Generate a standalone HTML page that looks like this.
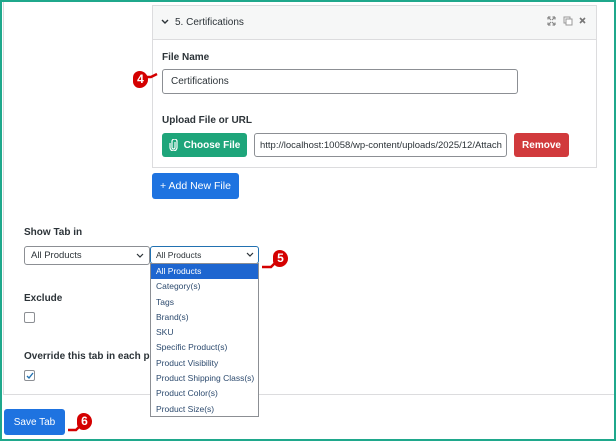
<!DOCTYPE html>
<html><head><meta charset="utf-8"><style>
*{box-sizing:border-box;margin:0;padding:0}
body{width:616px;height:441px;overflow:hidden;background:#fff;font-family:"Liberation Sans",sans-serif;color:#1d2327;position:relative}
.a{position:absolute}
.frame{left:0;top:0;width:616px;height:441px;border:2px solid #1fa88c}
.lbl{font-size:10px;font-weight:bold;color:#2c3338}
.inp{border:1px solid #8c8f94;border-radius:3px;background:#fff;font-size:10px;color:#2c3338;padding-left:8px;display:flex;align-items:center}
.btn{border-radius:3px;color:#fff;font-size:10px;font-weight:bold;display:flex;align-items:center;justify-content:center}
.li{font-size:8.5px;color:#2c4a6e;height:15.3px;line-height:15.3px;padding-left:5px}
.badge{color:#fff;font-weight:bold;font-size:12px;background:#d40000;border-radius:7px 9px 9px 7px;width:15px;height:17px;text-align:center;line-height:17px}
.cb{width:11px;height:11px;border:1px solid #8c8f94;border-radius:2px;background:#fff}
</style></head><body>
<div class="a frame"></div>
<div class="a" style="left:3px;top:2px;width:1px;height:393px;background:#dcdcde"></div>
<div class="a" style="left:3px;top:394px;width:611px;height:1px;background:#dcdcde"></div>

<div class="a" style="left:152px;top:5px;width:445px;height:163px;border:1px solid #dcdcde;background:#fff"></div>
<div class="a" style="left:153px;top:6px;width:443px;height:34px;background:#f6f7f7;border-bottom:1px solid #dcdcde"></div>
<svg class="a" style="left:161px;top:19px" width="8" height="6" viewBox="0 0 8 6"><path d="M1 1l3 3 3-3" stroke="#2c3338" stroke-width="1.4" fill="none"/></svg>
<div class="a" style="left:175px;top:17px;font-size:10px;color:#2c3338">5. Certifications</div>
<svg class="a" style="left:547px;top:16px" width="42" height="10" viewBox="0 0 42 10"><path d="M1 1l3 3M1 1h2.5M1 1v2.5M8 1L5 4M8 1H5.5M8 1v2.5M1 9l3-3M1 9h2.5M1 9V6.5M8 9L5 6M8 9H5.5M8 9V6.5" stroke="#888" stroke-width="1.2" fill="none"/><rect x="17" y="1" width="6" height="6" fill="none" stroke="#999"/><rect x="19" y="3" width="6" height="6" fill="#fff" stroke="#999"/><path d="M33 2l5 5M38 2l-5 5" stroke="#777" stroke-width="1.6"/></svg>

<div class="a lbl" style="left:162px;top:52px">File Name</div>
<div class="a inp" style="left:162px;top:69px;width:356px;height:25px">Certifications</div>
<div class="a lbl" style="left:162px;top:115px">Upload File or URL</div>
<div class="a btn" style="left:162px;top:133px;width:85px;height:24px;background:#1ea57a"><svg width="9" height="12" viewBox="0 0 9 12" style="margin-right:6px"><path d="M6 3v5.5a1.5 1.5 0 0 1-3 0V2.5a2.5 2.5 0 0 1 5 0V8.5a3.5 3.5 0 0 1-7 0V4" stroke="#fff" stroke-width="1.2" fill="none"/></svg>Choose File</div>
<div class="a inp" style="left:254px;top:133px;width:253px;height:24px;white-space:nowrap;overflow:hidden;font-size:9.5px;padding-left:5px">http://localhost:10058/wp-content/uploads/2025/12/Attach</div>
<div class="a btn" style="left:514px;top:133px;width:55px;height:24px;background:#d13a3c">Remove</div>
<div class="a btn" style="left:152px;top:173px;width:87px;height:26px;background:#1e73e0;font-weight:normal;font-size:10.5px">+ Add New File</div>

<div class="a badge" style="left:133px;top:71px">4</div>
<svg class="a" style="left:145px;top:72px" width="14" height="10"><path d="M0 5h6l6-3" stroke="#d40000" stroke-width="2.5" fill="none"/></svg>

<div class="a lbl" style="left:24px;top:227px">Show Tab in</div>
<div class="a inp" style="left:24px;top:246px;width:126px;height:19px;font-size:9.5px;padding-left:6px">All Products</div>
<svg class="a" style="left:136px;top:253px" width="8" height="6"><path d="M1 1l3 3 3-3" stroke="#2c3338" stroke-width="1.2" fill="none"/></svg>
<div class="a inp" style="left:150px;top:246px;width:109px;height:18px;border-color:#2271b1;font-size:8.5px;padding-left:5px">All Products</div>
<svg class="a" style="left:246px;top:252px" width="8" height="6"><path d="M1 1l3 3 3-3" stroke="#2c3338" stroke-width="1.2" fill="none"/></svg>
<div class="a" style="left:150px;top:263px;width:109px;height:154px;border:1px solid #8c8f94;background:#fff">
<div class="li" style="background:#1e66d0;color:#fff">All Products</div>
<div class="li">Category(s)</div><div class="li">Tags</div><div class="li">Brand(s)</div><div class="li">SKU</div>
<div class="li">Specific Product(s)</div><div class="li">Product Visibility</div><div class="li">Product Shipping Class(s)</div>
<div class="li">Product Color(s)</div><div class="li">Product Size(s)</div>
</div>
<div class="a badge" style="left:273px;top:250px">5</div>
<svg class="a" style="left:262px;top:258px" width="16" height="14"><path d="M0 9h9l5-5" stroke="#d40000" stroke-width="2.5" fill="none"/></svg>

<div class="a lbl" style="left:24px;top:293px">Exclude</div>
<div class="a cb" style="left:24px;top:312px"></div>
<div class="a lbl" style="left:24px;top:351px;width:126px;overflow:hidden;white-space:nowrap">Override this tab in each product</div>
<div class="a cb" style="left:24px;top:370px"></div>
<svg class="a" style="left:25px;top:371px" width="10" height="10"><path d="M2 5l2 2 4-5" stroke="#2271b1" stroke-width="1.4" fill="none"/></svg>

<div class="a btn" style="left:4px;top:409px;width:61px;height:26px;background:#1e73e0;font-weight:normal">Save Tab</div>
<div class="a badge" style="left:77px;top:413px">6</div>
<svg class="a" style="left:68px;top:420px" width="16" height="14"><path d="M0 10h8l5-5" stroke="#d40000" stroke-width="2.5" fill="none"/></svg>
</body></html>
